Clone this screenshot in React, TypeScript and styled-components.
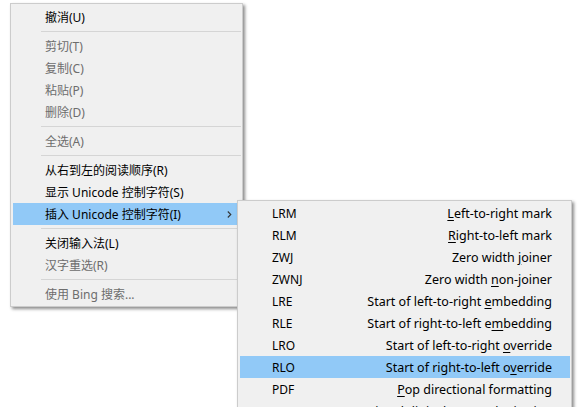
import styled, { createGlobalStyle } from "styled-components";

const GlobalStyle = createGlobalStyle`
  html, body {
    margin: 0;
    padding: 0;
    background: #ffffff;
    overflow: hidden;
  }
  body {
    font-family: "Noto Sans", "Noto Sans CJK SC", sans-serif;
    font-size: 12px;
  }
`;

type Entry =
  | { kind: "item"; label: string; disabled?: boolean; active?: boolean; submenu?: boolean }
  | { kind: "sep" };

const mainEntries: Entry[] = [
  { kind: "item", label: "撤消(U)" },
  { kind: "sep" },
  { kind: "item", label: "剪切(T)", disabled: true },
  { kind: "item", label: "复制(C)", disabled: true },
  { kind: "item", label: "粘贴(P)", disabled: true },
  { kind: "item", label: "删除(D)", disabled: true },
  { kind: "sep" },
  { kind: "item", label: "全选(A)", disabled: true },
  { kind: "sep" },
  { kind: "item", label: "从右到左的阅读顺序(R)" },
  { kind: "item", label: "显示 Unicode 控制字符(S)" },
  { kind: "item", label: "插入 Unicode 控制字符(I)", active: true, submenu: true },
  { kind: "sep" },
  { kind: "item", label: "关闭输入法(L)" },
  { kind: "item", label: "汉字重选(R)", disabled: true },
  { kind: "sep" },
  { kind: "item", label: "使用 Bing 搜索...", disabled: true },
];

// [code, text before key, access key, text after key]
const controlChars: [string, string, string, string][] = [
  ["LRM", "", "L", "eft-to-right mark"],
  ["RLM", "", "R", "ight-to-left mark"],
  ["ZWJ", "Zero width ", "j", "oiner"],
  ["ZWNJ", "Zero width ", "n", "on-joiner"],
  ["LRE", "Start of left-to-right ", "e", "mbedding"],
  ["RLE", "Start of right-to-left e", "m", "bedding"],
  ["LRO", "Start of left-to-right ", "o", "verride"],
  ["RLO", "Start of right-to-left o", "v", "erride"],
  ["PDF", "", "P", "op directional formatting"],
  ["NADS", "", "N", "ational digit shapes substitution"],
];

const Chevron = () => (
  <svg width="5" height="7" viewBox="0 0 5 7">
    <path d="M0.8 0.5 L3.8 3.5 L0.8 6.5" fill="none" stroke="#333" strokeWidth="1.1" />
  </svg>
);

const App = () => {
  return (
    <>
      <GlobalStyle />
      <Page>
        <Menu $width={233} $padTop={2}>
          {mainEntries.map((e, i) =>
            e.kind === "sep" ? (
              <Separator key={i} />
            ) : (
              <Item key={i} $disabled={e.disabled} $active={e.active}>
                <span>{e.label}</span>
                {e.submenu && (
                  <Arrow>
                    <Chevron />
                  </Arrow>
                )}
              </Item>
            )
          )}
        </Menu>
        <SubMenu $width={335} $padTop={1}>
          {controlChars.map(([code, pre, key, post]) => (
            <Item key={code} $active={code === "RLO"}>
              <Code>{code}</Code>
              <Description>
                {pre}
                <Key>{key}</Key>
                {post}
              </Description>
            </Item>
          ))}
        </SubMenu>
      </Page>
    </>
  );
};

const Page = styled.div`
  position: relative;
  width: 580px;
  height: 407px;
  overflow: hidden;
  padding: 3px 0 0 10px;
  box-sizing: border-box;
`;

const Menu = styled.div<{ $width: number; $padTop: number }>`
  width: ${(p) => p.$width}px;
  box-sizing: border-box;
  background: #f0f0f0;
  border: 1px solid #cccccc;
  padding: ${(p) => p.$padTop}px 1px 1px 2px;
  box-shadow: 2px 2px 3px rgba(0, 0, 0, 0.45);
  display: flex;
  flex-direction: column;
`;

const SubMenu = styled(Menu)`
  position: absolute;
  left: 237px;
  top: 200px;
`;

const Item = styled.div<{ $disabled?: boolean; $active?: boolean }>`
  height: 22px;
  box-sizing: border-box;
  display: flex;
  align-items: center;
  justify-content: space-between;
  padding: 2px 18px 0 32px;
  color: ${(p) => (p.$disabled ? "#6d6d6d" : "#000000")};
  background: ${(p) => (p.$active ? "#91c9f7" : "transparent")};
  white-space: nowrap;
  line-height: 20px;
`;

const Arrow = styled.span`
  display: flex;
  margin-top: -2px;
  margin-right: -9px;
`;

const Separator = styled.div`
  height: 1px;
  margin: 3px 0 3px 28px;
  background: #d5d5d5;
`;

const Code = styled.span``;

const Description = styled.span`
  font-size: 12.5px;
`;

const Key = styled.span`
  text-decoration: underline;
  text-underline-offset: 2px;
  text-decoration-thickness: 1px;
`;

export default App;
